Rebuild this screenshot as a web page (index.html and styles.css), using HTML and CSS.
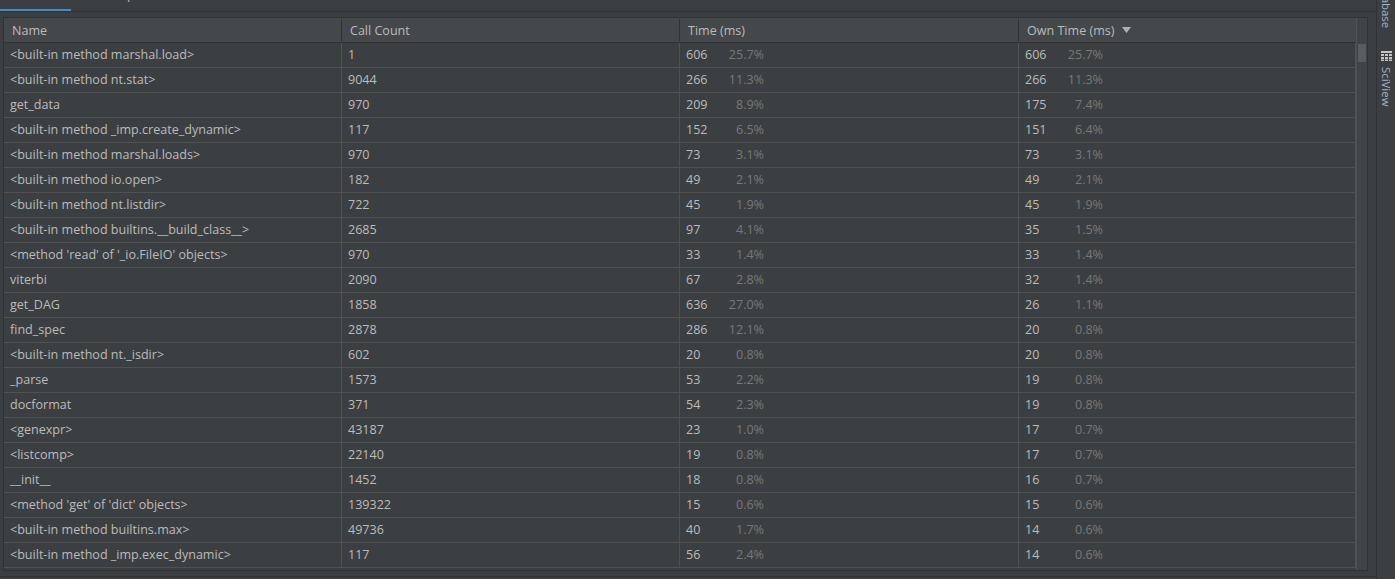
FILE: index.html
```html
<!DOCTYPE html>
<html lang="en">
<head>
<meta charset="utf-8">
<title>Statistics</title>
<link rel="stylesheet" href="styles.css">
</head>
<body>
<div class="app">
  <main class="main">
    <div class="tabs"><div class="tab-active"></div><span class="tab-clip">p</span></div>
    <section class="panel">
      <div class="table">
        <div class="row head">
          <div class="cell name">Name</div>
          <div class="cell count">Call Count</div>
          <div class="cell time">Time (ms)</div>
          <div class="cell own">Own Time (ms)<svg class="sort" width="9" height="6" viewBox="0 0 9 6"><path d="M0 0H9L4.500 6Z"/></svg></div>
        </div>
        <div class="body" id="body"></div>
      </div>
      <div class="scroll"><div class="thumb"></div></div>
    </section>
  </main>
  <aside class="side">
    <div class="side-btn base"><span class="vtext">Database</span></div>
    <div class="side-btn sci">
      <svg class="grid-ico" width="11" height="10" viewBox="0 0 11 10"><path d="M0 0h11v2H0zM0 3h3v2H0zM4 3h3v2H4zM8 3h3v2H8zM0 6h3v2H0zM4 6h3v2H4zM8 6h3v2H8zM0 8.500h3V10H0zM4 8.500h3V10H4zM8 8.500h3V10H8z"/></svg>
      <span class="vtext">SciView</span>
    </div>
  </aside>
</div>
<script src="app.js"></script>
</body>
</html>
```
FILE: styles.css
```css
* { box-sizing: border-box; }
html, body { margin: 0; height: 100%; overflow: hidden; }
body { background: #3c3f41; color: #bbbbbb; font: 12.55px "Open Sans", "Liberation Sans", sans-serif; }
.app { display: flex; height: 579px; }
.main { width: 1376px; height: 577px; border-bottom: 1px solid #323232; display: flex; flex-direction: column; }
.tabs { height: 12px; border-bottom: 1px solid #323232; position: relative; overflow: hidden; flex: none; }
.tab-active { width: 71px; height: 3px; margin-top: 9px; background: #4a88c7; }
.tab-clip { position: absolute; left: 127px; top: -14px; }
.panel { margin: 5px 8px 0 3px; height: 554px; border: 1px solid #323232; display: flex; overflow: hidden; background: #3c3f41; }
.table { flex: 1; min-width: 0; }
.row { display: grid; grid-template-columns: 338px 338px 339px 1fr; height: 25px; border-bottom: 1px solid #515151; align-items: start; }
.head { background: #45484a; border-bottom-color: #323232; align-items: center; }
.head .cell { height: 22px; line-height: 24px; padding-left: 8px; border-right: 1px solid #323232; }
.head .cell:last-child { border-right: 0; }
.cell { padding-left: 6px; white-space: nowrap; border-right: 1px solid #515151; height: 24px; line-height: 23px; display: flex; }
.sort { fill: #b0b0b0; margin: 8px 0 0 8px; }
.num { width: 39px; }
.pct { width: 39px; text-align: right; color: #787878; }
.scroll { width: 11px; flex: none; background: #414446; border-left: 1px solid #515151; padding-top: 26px; }
.thumb { height: 18px; margin-left: 1px; width: 8px; background: #5a5d5f; }
.side { width: 19px; flex: none; border-left: 1px solid #323232; color: #9fb4c4; }
.side-btn { display: flex; flex-direction: column; align-items: center; }
.base { height: 28px; justify-content: flex-end; }
.sci { margin-top: 23px; gap: 6px; }
.grid-ico { fill: #c4c4c4; }
.vtext { writing-mode: vertical-rl; font-size: 11.4px; white-space: nowrap; }
```
FILE: app.js
```js
const rows = [
  ["<built-in method marshal.load>",1,606,"25.7%",606,"25.7%"],
  ["<built-in method nt.stat>",9044,266,"11.3%",266,"11.3%"],
  ["get_data",970,209,"8.9%",175,"7.4%"],
  ["<built-in method _imp.create_dynamic>",117,152,"6.5%",151,"6.4%"],
  ["<built-in method marshal.loads>",970,73,"3.1%",73,"3.1%"],
  ["<built-in method io.open>",182,49,"2.1%",49,"2.1%"],
  ["<built-in method nt.listdir>",722,45,"1.9%",45,"1.9%"],
  ["<built-in method builtins.__build_class__>",2685,97,"4.1%",35,"1.5%"],
  ["<method 'read' of '_io.FileIO' objects>",970,33,"1.4%",33,"1.4%"],
  ["viterbi",2090,67,"2.8%",32,"1.4%"],
  ["get_DAG",1858,636,"27.0%",26,"1.1%"],
  ["find_spec",2878,286,"12.1%",20,"0.8%"],
  ["<built-in method nt._isdir>",602,20,"0.8%",20,"0.8%"],
  ["_parse",1573,53,"2.2%",19,"0.8%"],
  ["docformat",371,54,"2.3%",19,"0.8%"],
  ["<genexpr>",43187,23,"1.0%",17,"0.7%"],
  ["<listcomp>",22140,19,"0.8%",17,"0.7%"],
  ["__init__",1452,18,"0.8%",16,"0.7%"],
  ["<method 'get' of 'dict' objects>",139322,15,"0.6%",15,"0.6%"],
  ["<built-in method builtins.max>",49736,40,"1.7%",14,"0.6%"],
  ["<built-in method _imp.exec_dynamic>",117,56,"2.4%",14,"0.6%"]
];
const body = document.getElementById("body");
const el = (cls, text) => {
  const d = document.createElement("div");
  d.className = cls;
  if (text !== undefined) d.textContent = text;
  return d;
};
for (const r of rows) {
  const row = el("row");
  row.append(el("cell name", r[0]), el("cell count", r[1]));
  for (const i of [2, 4]) {
    const c = el("cell");
    c.append(el("num", r[i]), el("pct", r[i + 1]));
    row.append(c);
  }
  body.append(row);
}
```
